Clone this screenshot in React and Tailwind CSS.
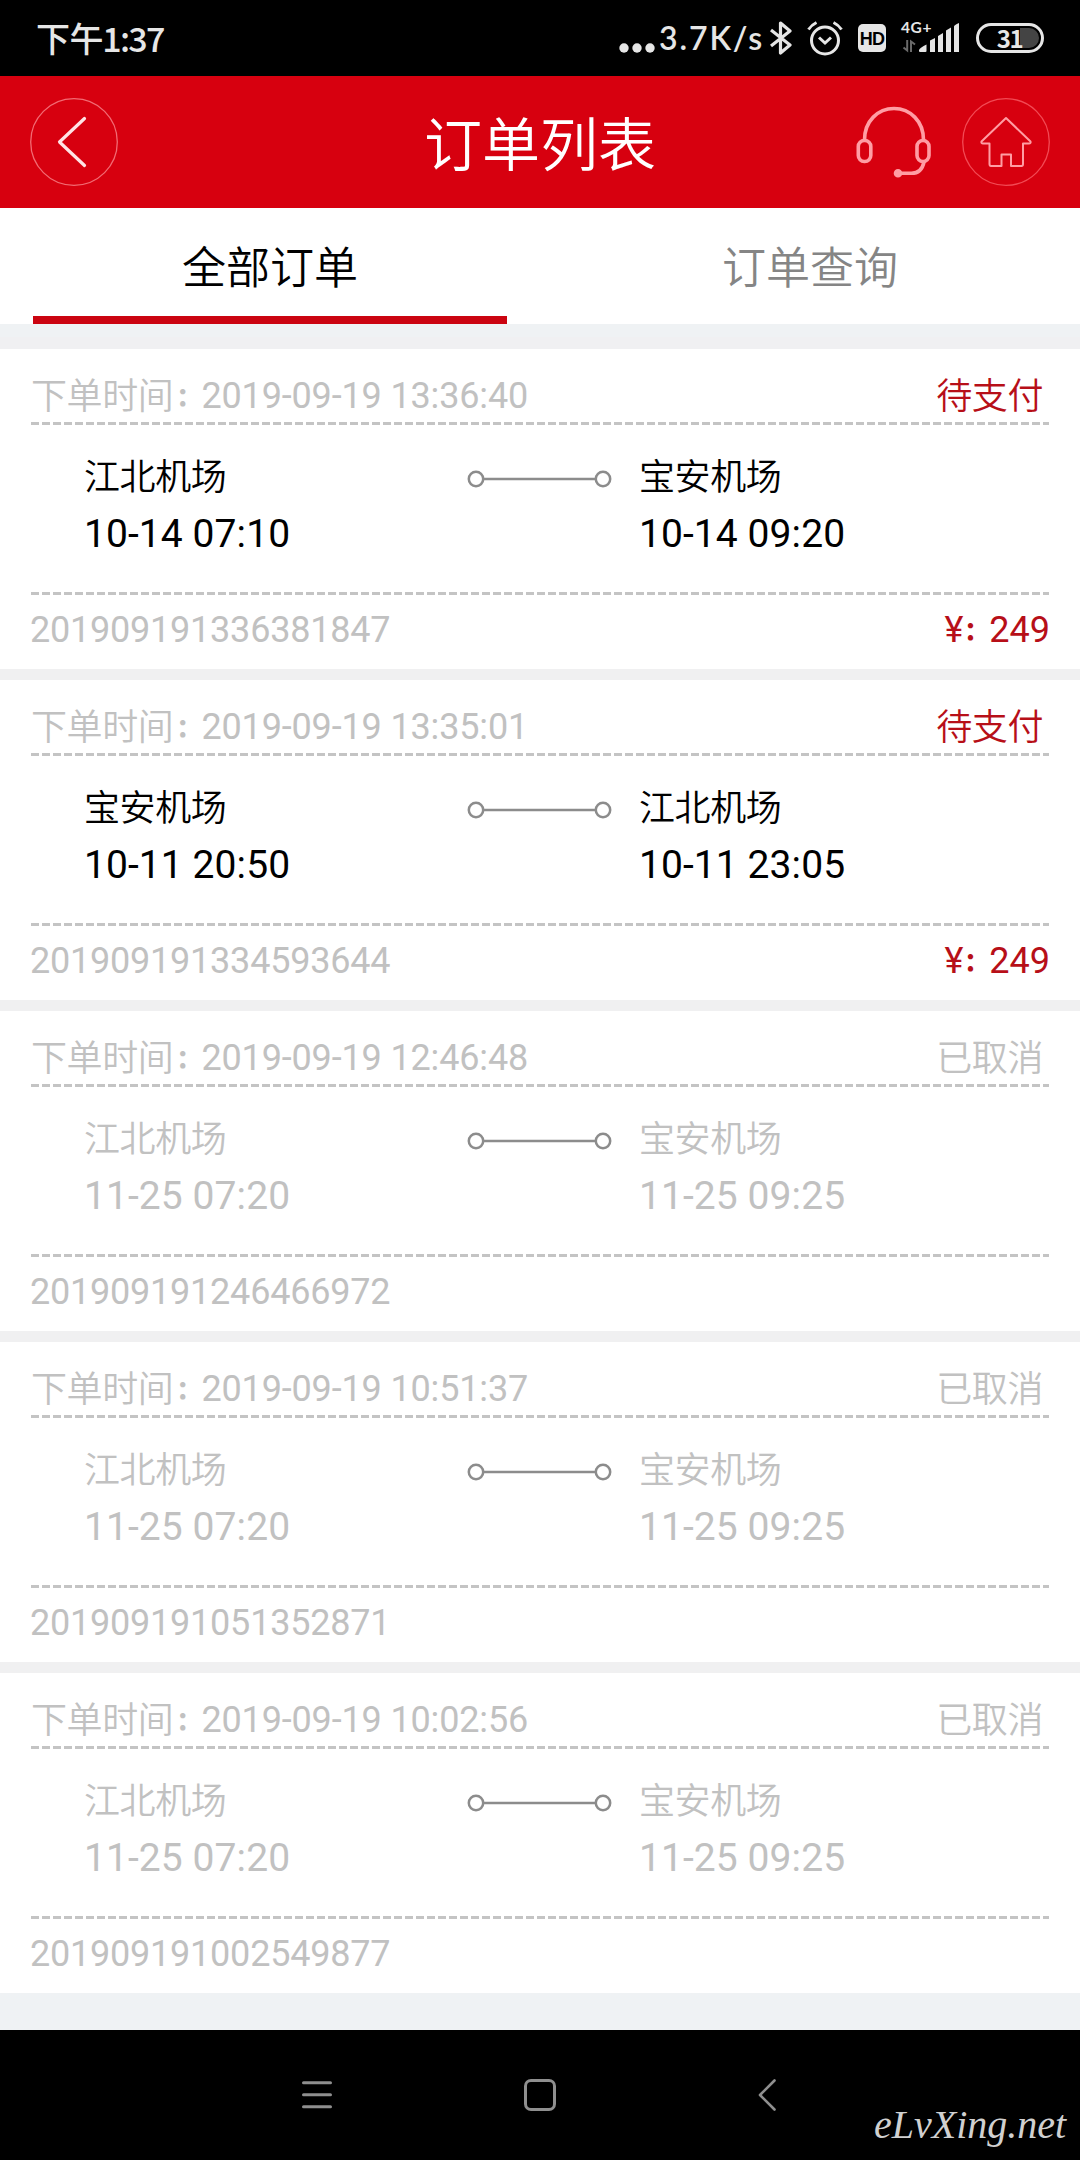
import React from "react";

const orders = [
  { placed: "2019-09-19 13:36:40", status: "待支付", from: "江北机场", dep: "10-14 07:10", to: "宝安机场", arr: "10-14 09:20", no: "201909191336381847", price: "249" },
  { placed: "2019-09-19 13:35:01", status: "待支付", from: "宝安机场", dep: "10-11 20:50", to: "江北机场", arr: "10-11 23:05", no: "201909191334593644", price: "249" },
  { placed: "2019-09-19 12:46:48", status: "已取消", from: "江北机场", dep: "11-25 07:20", to: "宝安机场", arr: "11-25 09:25", no: "201909191246466972" },
  { placed: "2019-09-19 10:51:37", status: "已取消", from: "江北机场", dep: "11-25 07:20", to: "宝安机场", arr: "11-25 09:25", no: "201909191051352871" },
  { placed: "2019-09-19 10:02:56", status: "已取消", from: "江北机场", dep: "11-25 07:20", to: "宝安机场", arr: "11-25 09:25", no: "201909191002549877" },
];

function StatusBar() {
  return (
    <div className="flex h-[76px] justify-between bg-black text-[#e6e6e6]">
      <div className="flex pl-[36px] pt-[18px] font-['Noto_Sans_CJK_SC'] text-[34px] font-medium leading-[40px]">
        <span className="tracking-[-0.4px]">下午</span>
        <span className="-ml-[1px] tracking-[-1.7px]">1:37</span>
      </div>
      <div className="flex">
        <svg className="mt-[43px] h-[10px] w-[36px]" viewBox="0 0 36 10" fill="currentColor">
          <circle cx="5" cy="5" r="4.7" />
          <circle cx="18" cy="5" r="4.7" />
          <circle cx="31" cy="5" r="4.7" />
        </svg>
        <span className="ml-[4px] w-[104px] whitespace-nowrap pt-[18px] font-[Lato,sans-serif] text-[32px] font-semibold leading-[40px] tracking-[1.9px]">3.7K/s</span>
        <svg className="ml-[7px] mt-[20px] h-[36px] w-[22px]" viewBox="0 0 22 36" fill="none" stroke="currentColor" strokeWidth="3.2" strokeLinejoin="round">
          <path d="M1 10 L20 25 L10.500 33 V3 L20 11 L1 26" />
        </svg>
        <svg className="ml-[15px] mt-[20px] h-[36px] w-[36px]" viewBox="0 0 36 36" fill="none" stroke="currentColor" strokeWidth="3">
          <circle cx="18" cy="20.500" r="13.500" />
          <path d="M1.500 9.500 Q4.500 5 9.500 2.500 M34.500 9.500 Q31.500 5 26.500 2.500" />
          <path d="M12 17.500 L18 23 L24 17.500" />
        </svg>
        <span className="ml-[15px] mt-[24px] flex h-[28px] w-[28px] items-center justify-center rounded-[5px] bg-[#e6e6e6] pt-px font-['Liberation_Sans',sans-serif] text-[18px] font-bold leading-none tracking-[-0.8px] text-black">HD</span>
        <div className="ml-[15px] mt-[20px] w-[60px]">
          <div className="h-[14px] font-[Lato,sans-serif] text-[15.5px] font-bold leading-[15px] tracking-[0.6px]">4G+</div>
          <svg className="-mt-[12px] h-[32px] w-[60px]" viewBox="0 0 60 32" fill="currentColor">
            <path d="M18 29 V28 Q19 25.500 25.500 22.500 V29 Q25.500 30 24.500 30 H19 Q18 30 18 29 Z" />
            <path d="M29 18.500 L34 16 V30 H29 Z M37 14 L42 11 V30 H37 Z M45 8.500 L50 5.500 V30 H45 Z M53 4.500 Q53 3 58 1 V30 H53 Z" />
            <path d="M6.200 18 V28.500 L2.500 25.500 M10 30 V19.500 L14 22.500" fill="none" stroke="#6a6a6a" strokeWidth="2" />
          </svg>
        </div>
        <div className="ml-[15px] mr-[36px] mt-[23px] flex h-[30px] w-[68px] rounded-full border-[3px] border-[#e6e6e6] p-[2px]">
          <div className="flex h-full w-full items-center justify-center rounded-full bg-linear-to-r from-transparent from-68% to-[#444] to-68% pr-px font-['Noto_Sans_CJK_SC',sans-serif] text-[24px] font-bold leading-none tracking-[-1.5px]">31</div>
        </div>
      </div>
    </div>
  );
}

function Header() {
  return (
    <header className="grid h-[132px] grid-cols-3 items-center bg-[#d7000f] text-white">
      <svg className="ml-[30px] h-[88px] w-[88px]" viewBox="0 0 88 88" fill="none">
        <circle cx="44" cy="44" r="43.300" stroke="#f26b74" strokeWidth="1.3" />
        <path d="M54.500 20.500 L29.500 44 L54.500 67.500" stroke="#ffe3e5" strokeWidth="3.2" strokeLinecap="round" strokeLinejoin="round" />
      </svg>
      <h1 className="whitespace-nowrap pt-[7px] text-center font-[Roboto,'Noto_Sans_CJK_SC'] text-[58px] font-[350] leading-[60px]">订单列表</h1>
      <div className="flex justify-end pr-[30px]">
        <svg className="mr-[31px] mt-[8px] h-[72px] w-[75px]" viewBox="0 0 75 72" fill="none" stroke="#ff9da4" strokeWidth="3.600" strokeLinecap="round">
          <path d="M8.500 34 C8.500 15 22 2.500 38 2.500 S67.500 15 67.500 34" />
          <rect x="2.300" y="34.500" width="12.500" height="21" rx="6" />
          <rect x="61" y="34.500" width="12" height="21" rx="6" />
          <path d="M68 56 C66.500 63 62.500 67.300 55.500 67.300 H41.500" />
          <circle cx="42" cy="67.300" r="2.500" fill="#ff9da4" />
        </svg>
        <svg className="h-[88px] w-[88px]" viewBox="0 0 88 88" fill="none">
          <circle cx="44" cy="44" r="43.300" stroke="#f24a55" strokeWidth="1.3" />
          <path d="M44 20 L19.500 43.500 Q19 45.500 21 45.500 H27.500 V66 Q27.500 68 29 68 H39.500 V56.500 H49 V68 H59.500 Q61 68 61 66 V45.500 H67 Q69 45.500 68.500 43.500 Z" stroke="#ff9da4" strokeWidth="2" strokeLinejoin="round" />
        </svg>
      </div>
    </header>
  );
}

function Dashes() {
  return (
    <div className="mx-[31px] h-[3px] bg-[repeating-linear-gradient(90deg,#c4c4c4_0px,#c4c4c4_8px,transparent_8px,transparent_11px)]" />
  );
}

function OrderCard({ order }) {
  const pending = Boolean(order.price);
  const routeColor = pending ? "text-black" : "text-[#c1c1c1]";
  const statusColor = pending ? "text-[#b70f18]" : "text-[#c1c1c1]";
  return (
    <article className="h-[320px] bg-white">
      <div className="flex h-[73px] justify-between pl-[31px] pr-[37px] pt-[29px] text-[36px] leading-[36px] text-[#c1c1c1]">
        <div className="flex whitespace-nowrap">
          <span className="pt-px font-[350] tracking-[-0.4px]">下单时间</span>
          <span className="w-[28px] pl-[3px] text-[25px] font-black leading-[39px]">：</span>
          <span className="tracking-[-0.15px]">{order.placed}</span>
        </div>
        <span className={`pt-px font-[350] tracking-[-0.4px] ${statusColor}`}>{order.status}</span>
      </div>
      <Dashes />
      <div className={`flex h-[167px] pl-[84px] pt-[35px] ${routeColor}`}>
        <div className="w-[383px]">
          <div className="text-[36px] font-[350] leading-[36px] tracking-[-0.4px]">{order.from}</div>
          <div className="mt-[18px] text-[39px] leading-[40px] tracking-[0.08px]">{order.dep}</div>
        </div>
        <svg className="mt-[9px] h-[20px] w-[145px]" viewBox="0 0 145 20" fill="none" stroke="#8c8c8c" strokeWidth="2.500">
          <circle cx="9" cy="10" r="7.200" />
          <path d="M16 10 H129" />
          <circle cx="136" cy="10" r="7.200" />
        </svg>
        <div className="ml-[27px]">
          <div className="text-[36px] font-[350] leading-[36px] tracking-[-0.4px]">{order.to}</div>
          <div className="mt-[18px] text-[39px] leading-[40px] tracking-[0.08px]">{order.arr}</div>
        </div>
      </div>
      <Dashes />
      <div className="flex justify-between pl-[30px] pr-[30px] pt-[17px] text-[36px] leading-[36px] text-[#c1c1c1]">
        <span className="tracking-[-0.22px]">{order.no}</span>
        {pending && (
          <span className="flex text-[#b70f18]">
            <span>¥</span>
            <span className="w-[26px] pl-px text-[25px] font-black leading-[39px]">：</span>
            <span>{order.price}</span>
          </span>
        )}
      </div>
    </article>
  );
}

function NavBar() {
  return (
    <nav className="flex h-[130px] items-start justify-end bg-black pt-[48px] text-[#8f8f8f]">
      <svg className="h-[34px] w-[32px]" viewBox="0 0 32 34" stroke="currentColor" strokeWidth="3" strokeLinecap="round">
        <path d="M2.500 4.700 H29.500 M2.500 16.700 H29.500 M2.500 28.700 H29.500" />
      </svg>
      <svg className="ml-[190px] h-[34px] w-[34px]" viewBox="0 0 34 34" fill="none" stroke="currentColor" strokeWidth="3">
        <rect x="2.500" y="2.500" width="29" height="29" rx="5.500" />
      </svg>
      <svg className="ml-[200px] h-[34px] w-[20px]" viewBox="0 0 20 34" fill="none" stroke="currentColor" strokeWidth="2.600" strokeLinecap="round" strokeLinejoin="round">
        <path d="M17.500 2.500 L3 17 L17.500 31.500" />
      </svg>
      <span className="ml-[97px] mr-[8px] mt-[27px] w-[198px] whitespace-nowrap font-['Brush_Script_MT','Z003','Liberation_Serif',cursive] text-[40px] font-medium italic leading-[40px] text-[#d0d0d0]">eLvXing.net</span>
    </nav>
  );
}

export default function App() {
  return (
    <div className="flex h-[2160px] w-[1080px] flex-col overflow-hidden bg-[#eff2f4] font-[Roboto,'Noto_Sans_CJK_SC',sans-serif]">
      <StatusBar />
      <Header />
      <div className="grid h-[116px] grid-cols-2 bg-white text-center text-[44px] font-[350] leading-[44px]">
        <div className="flex flex-col justify-between pt-[39px] text-black">
          <span>全部订单</span>
          <div className="mx-[33px] h-[8px] bg-[#cb0411]" />
        </div>
        <div className="pt-[39px] text-[#858585]">订单查询</div>
      </div>
      <div className="h-[13px]" />
      <div className="h-[12px] bg-[#f0f0f2]" />
      <main className="flex flex-col gap-[11px] bg-[#f0f0f1]">
        {orders.map((order) => (
          <OrderCard key={order.no} order={order} />
        ))}
      </main>
      <div className="h-[37px]" />
      <NavBar />
    </div>
  );
}
